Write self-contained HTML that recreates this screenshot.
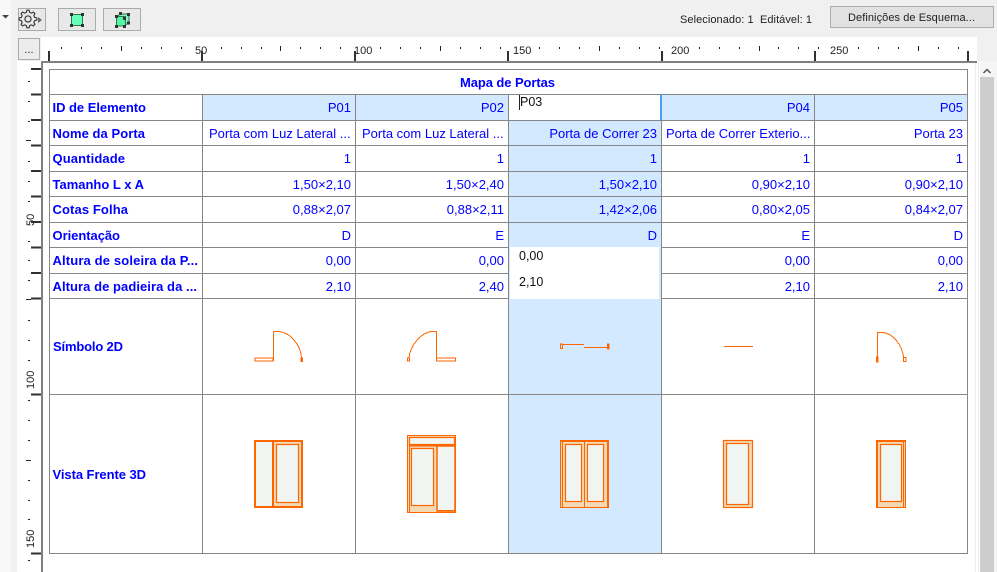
<!DOCTYPE html>
<html><head><meta charset="utf-8">
<style>
html,body{margin:0;padding:0;width:997px;height:572px;overflow:hidden;background:#f0f0f0}
svg{display:block;font-family:"Liberation Sans",Arial,sans-serif}
.b{font-size:13px;font-weight:bold;fill:#0000ff}
.v{font-size:13px;fill:#0000ff;text-anchor:end}
.l{font-size:13px;fill:#0000ff}
.r{font-size:11px;fill:#222}
.t{font-size:11px;fill:#222}
.e{font-size:12.500px;fill:#111}
.o{fill:none;stroke:#ff6600;stroke-width:1;shape-rendering:crispEdges}
</style></head><body>
<svg width="997" height="572" viewBox="0 0 997 572" xmlns="http://www.w3.org/2000/svg">
<!-- backgrounds -->
<rect x="0" y="0" width="997" height="572" fill="#f0f0f0"/>
<rect x="0" y="0" width="11" height="572" fill="#f8f8f8"/>
<rect x="41" y="37" width="936" height="25" fill="#fff"/>
<rect x="17" y="61" width="960" height="511" fill="#fff"/>
<rect x="977" y="61" width="20" height="511" fill="#fff"/>
<rect x="975" y="61" width="1" height="511" fill="#eee"/>
<rect x="978" y="61" width="1" height="511" fill="#eee"/>
<rect x="980" y="61" width="17" height="511" fill="#f5f5f5"/>
<rect x="980" y="77" width="14" height="495" fill="#cdcdcd"/>
<path d="M983.500 73 L987 69.500 L990.500 73" fill="none" stroke="#555" stroke-width="1.500"/>

<!-- toolbar -->
<path d="M2 15h7l-3.500 3.500z" fill="#444"/>
<rect x="18.500" y="8.500" width="27" height="22" fill="#e8e8e8" stroke="#ababab"/>
<g transform="translate(28 19) scale(1.1) translate(-28.500 -19.500)">
<path d="M27.500 11.500h2l.5 2 1.600.7 1.800-1 1.400 1.400-1 1.800.7 1.600 2 .5v2l-2 .5-.7 1.600 1 1.800-1.400 1.400-1.800-1-1.600.7-.5 2h-2l-.5-2-1.600-.7-1.800 1-1.400-1.400 1-1.800-.7-1.600-2-.5v-2l2-.5.7-1.600-1-1.800 1.400-1.400 1.800 1 1.600-.7z" fill="none" stroke="#333" stroke-width="1"/>
<circle cx="28.500" cy="19.500" r="2.800" fill="none" stroke="#333"/>
</g>
<path d="M38 17l4 3-4 3z" fill="#666"/>
<rect x="58.500" y="8.500" width="37" height="22" fill="#e8e8e8" stroke="#ababab"/>
<rect x="71.500" y="14.500" width="11" height="11" fill="#66ffb8" stroke="#2a7a50"/>
<g fill="#333"><rect x="70" y="13" width="3" height="3"/><rect x="81" y="13" width="3" height="3"/><rect x="70" y="24" width="3" height="3"/><rect x="81" y="24" width="3" height="3"/></g>
<rect x="103.500" y="8.500" width="37" height="22" fill="#e8e8e8" stroke="#ababab"/>
<path d="M116.500 16.500l4-2.500h8.500v8.500l-4 3" fill="#8cf0c0" stroke="#2a7a50"/>
<rect x="116.500" y="16.500" width="9" height="9.500" fill="#55f5a8" stroke="#2a7a50"/>
<g fill="#333"><rect x="119" y="12" width="3" height="3"/><rect x="127" y="13" width="3" height="3"/><rect x="115" y="15" width="3" height="3"/><rect x="123" y="17" width="3" height="3"/><rect x="127" y="21.500" width="3" height="3"/><rect x="115" y="25" width="3" height="3"/><rect x="123" y="25" width="3" height="3"/></g>
<rect x="18.500" y="38.500" width="21" height="21" fill="#ececec" stroke="#ababab"/>
<text x="29" y="53" class="t" text-anchor="middle">...</text>
<text x="680" y="23" class="t" xml:space="preserve" textLength="132" lengthAdjust="spacing">Selecionado: 1  Editável: 1</text>
<rect x="830.500" y="6.500" width="163" height="21" fill="#e1e1e1" stroke="#adadad"/>
<text x="848" y="21" class="t" textLength="127" lengthAdjust="spacing">Definições de Esquema...</text>

<!-- top ruler -->
<path d="M61 47v2M81 47v2M101 47v2M141 47v2M161 47v2M181 47v2M221 47v2M241 47v2M261 47v2M300 47v2M320 47v2M340 47v2M380 47v2M400 47v2M420 47v2M460 47v2M480 47v2M500 47v2M539 47v2M559 47v2M579 47v2M619 47v2M639 47v2M659 47v2M699 47v2M719 47v2M739 47v2M778 47v2M798 47v2M818 47v2M858 47v2M878 47v2M898 47v2M938 47v2M958 47v2" stroke="#222" stroke-width="1" fill="none" transform="translate(.5 0)"/>
<path d="M121.500 46v5M280.500 46v5M440.500 46v5M599.500 46v5M759.500 46v5M918.500 46v5" stroke="#222" fill="none"/>
<text x="195" y="54" class="r">50</text>
<text x="354" y="54" class="r">100</text>
<text x="513" y="54" class="r">150</text>
<text x="671" y="54" class="r">200</text>
<text x="830" y="54" class="r">250</text>
<path d="M49 51v10M202 51v10M355 51v10M508 51v10M662 51v10M815 51v10M968 51v10" stroke="#2c3338" stroke-width="2" fill="none"/>

<!-- left ruler -->
<path d="M28 81h2M28 101h2M28 121h2M28 161h2M28 181h2M28 201h2M28 241h2M28 260h2M28 280h2M28 320h2M28 340h2M28 360h2M28 400h2M28 420h2M28 440h2M28 480h2M28 500h2M28 519h2M28 540h2M28 560h2" stroke="#222" fill="none" transform="translate(0 .5)"/>
<path d="M26 140.500h5M26 299.500h5M26 460.500h5" stroke="#222" fill="none"/>
<path d="M31 69h10M31 94.500h10M31 120h10M31 145.500h10M31 171h10M31 196.500h10M31 222h10M31 247.500h10M31 273h10M31 298.500h10M31 394.500h10M31 553.500h10" stroke="#2c3338" stroke-width="2" fill="none"/>
<text transform="translate(34 226) rotate(-90)" class="r">50</text>
<text transform="translate(34 389) rotate(-90)" class="r">100</text>
<text transform="translate(34 548) rotate(-90)" class="r">150</text>
<rect x="41" y="61" width="2" height="511" fill="#808080"/>
<rect x="41" y="61" width="936" height="2" fill="#808080"/>

<!-- table fills -->
<rect x="49" y="69" width="919" height="485" fill="#fff"/>
<rect x="202" y="94" width="306" height="26" fill="#d3e9ff"/>
<rect x="661" y="94" width="306" height="26" fill="#d3e9ff"/>
<rect x="508" y="120" width="153" height="433" fill="#d3e9ff"/>

<!-- grid -->
<g stroke="#868686" fill="none">
<rect x="49.500" y="69.500" width="918" height="484"/>
<path d="M49 94.500h919M49 120.500h919M49 145.500h919M49 171.500h919M49 196.500h919M49 222.500h919M49 247.500h919M49 273.500h919M49 298.500h919M49 394.500h919"/>
<path d="M202.500 94v460M355.500 94v460M508.500 94v460M661.500 94v460M814.500 94v460"/>
</g>

<!-- editors -->
<rect x="509" y="95" width="151" height="25" fill="#fff"/>
<rect x="660" y="94" width="2" height="26" fill="#4a9eed"/>
<rect x="510" y="247" width="149" height="52" fill="#fff"/>
<rect x="509" y="247" width="1" height="52" fill="#d3e9ff"/>
<rect x="659" y="247" width="2" height="52" fill="#d3e9ff"/>
<rect x="519" y="95" width="1" height="15" fill="#222"/>
<text x="520" y="106" class="e" font-size="13">P03</text>
<text x="519" y="260" class="e">0,00</text>
<text x="519" y="286" class="e">2,10</text>

<!-- labels -->
<text x="460" y="87" class="b" textLength="95" lengthAdjust="spacing">Mapa de Portas</text>
<text x="52.500" y="112" class="b" textLength="93.500" lengthAdjust="spacing">ID de Elemento</text>
<text x="52.500" y="138" class="b" textLength="92.500" lengthAdjust="spacing">Nome da Porta</text>
<text x="52.500" y="163" class="b" textLength="72.500" lengthAdjust="spacing">Quantidade</text>
<text x="52.500" y="189" class="b" textLength="91.500" lengthAdjust="spacing">Tamanho L x A</text>
<text x="52.500" y="214" class="b" textLength="75.500" lengthAdjust="spacing">Cotas Folha</text>
<text x="52.500" y="240" class="b" textLength="67.500" lengthAdjust="spacing">Orientação</text>
<text x="52.500" y="265" class="b" textLength="145.500" lengthAdjust="spacing">Altura de soleira da P...</text>
<text x="52.500" y="291" class="b" textLength="144.500" lengthAdjust="spacing">Altura de padieira da ...</text>
<text x="53" y="351" class="b" textLength="70" lengthAdjust="spacing">Símbolo 2D</text>
<text x="52.500" y="479" class="b" textLength="93.500" lengthAdjust="spacing">Vista Frente 3D</text>

<!-- values -->
<text x="351" y="112" class="v">P01</text><text x="504" y="112" class="v">P02</text><text x="810" y="112" class="v">P04</text><text x="963" y="112" class="v">P05</text>
<text x="209" y="138" class="l">Porta com Luz Lateral ...</text><text x="362" y="138" class="l">Porta com Luz Lateral ...</text><text x="657" y="138" class="v">Porta de Correr 23</text><text x="666" y="138" class="l">Porta de Correr Exterio...</text><text x="963" y="138" class="v">Porta 23</text>
<text x="351" y="163" class="v">1</text><text x="504" y="163" class="v">1</text><text x="657" y="163" class="v">1</text><text x="810" y="163" class="v">1</text><text x="963" y="163" class="v">1</text>
<text x="351" y="189" class="v">1,50×2,10</text><text x="504" y="189" class="v">1,50×2,40</text><text x="657" y="189" class="v">1,50×2,10</text><text x="810" y="189" class="v">0,90×2,10</text><text x="963" y="189" class="v">0,90×2,10</text>
<text x="351" y="214" class="v">0,88×2,07</text><text x="504" y="214" class="v">0,88×2,11</text><text x="657" y="214" class="v">1,42×2,06</text><text x="810" y="214" class="v">0,80×2,05</text><text x="963" y="214" class="v">0,84×2,07</text>
<text x="351" y="240" class="v">D</text><text x="504" y="240" class="v">E</text><text x="657" y="240" class="v">D</text><text x="810" y="240" class="v">E</text><text x="963" y="240" class="v">D</text>
<text x="351" y="265" class="v">0,00</text><text x="504" y="265" class="v">0,00</text><text x="810" y="265" class="v">0,00</text><text x="963" y="265" class="v">0,00</text>
<text x="351" y="291" class="v">2,10</text><text x="504" y="291" class="v">2,40</text><text x="810" y="291" class="v">2,10</text><text x="963" y="291" class="v">2,10</text>

<!-- 2D symbols -->
<g class="o">
<rect x="255" y="358" width="18" height="3" stroke-width="1"/>
<path d="M273.500 361V331.500H278C290 332 301 345 301.500 358"/>
<rect x="301" y="358" width="1.500" height="3.500" fill="#ff6600"/>
<rect x="407.500" y="358" width="2" height="3"/>
<path d="M409 358C410 345 422 332 432 331.500H436.500V361"/>
<rect x="436.500" y="358" width="19" height="3"/>
<rect x="560.500" y="344" width="2" height="4.500"/>
<path d="M563 344.500H584M584 347.500H608"/>
<rect x="607.500" y="344" width="1.500" height="5" fill="#ff6600"/>
<path d="M724 346.500H753"/>
<path d="M877.500 358V332.500H882C893 333 902 345 903.500 357"/>
<rect x="876.500" y="357" width="1.500" height="5" fill="#ff6600"/>
<rect x="903.500" y="357.500" width="2.500" height="4"/>
</g>

<!-- 3D door 1 -->
<rect x="273" y="441" width="30" height="67" fill="#f2d9b4"/>
<rect x="255" y="441" width="18" height="66" fill="#f0f5f1" stroke="#ff6600" stroke-width="2"/>
<rect x="273" y="441" width="29" height="66" fill="none" stroke="#ff6600" stroke-width="2"/>
<rect x="276.500" y="444.500" width="22" height="58" fill="#f0f5f1" stroke="#ff6600" stroke-width="1.200"/>
<!-- 3D door 2 -->
<rect x="407.500" y="435.500" width="48" height="77" fill="#f2d9b4" stroke="#ff6600"/>
<rect x="409.500" y="437.500" width="45" height="7" fill="#f0f5f1" stroke="#ff6600" stroke-width="1.200"/>
<rect x="409" y="445" width="46" height="1.500" fill="#ff6600"/>
<path d="M409.500 445V512" stroke="#ff6600" fill="none"/>
<rect x="411.500" y="448.500" width="22" height="57" fill="#f0f5f1" stroke="#ff6600" stroke-width="1.200"/>
<rect x="437" y="446" width="18" height="65" fill="#f0f5f1" stroke="#ff6600" stroke-width="1.500"/>
<path d="M437 510.500H455" stroke="#ff6600"/>
<!-- 3D door 3 -->
<rect x="560.500" y="440.500" width="48" height="67" fill="#f2d9b4" stroke="#ff6600"/>
<path d="M562.500 441v66M584.500 441v66" stroke="#ff6600" fill="none"/>
<rect x="560" y="440" width="49" height="2" fill="#ff6600"/>
<rect x="607" y="440" width="2" height="68" fill="#ff6600"/>
<rect x="565.500" y="444.500" width="16" height="57" fill="#f0f5f1" stroke="#ff6600" stroke-width="1.200"/>
<rect x="587.500" y="444.500" width="16" height="57" fill="#f0f5f1" stroke="#ff6600" stroke-width="1.200"/>
<!-- 3D door 4 -->
<rect x="723.500" y="440.500" width="29" height="67" fill="#f2d9b4" stroke="#ff6600" stroke-width="1.200"/>
<rect x="726.500" y="443.500" width="22" height="61" fill="#f0f5f1" stroke="#ff6600" stroke-width="1.200"/>
<!-- 3D door 5 -->
<rect x="876.500" y="440.500" width="29" height="67" fill="#f2d9b4" stroke="#ff6600"/>
<rect x="876" y="440" width="30" height="2" fill="#ff6600"/>
<rect x="876" y="440" width="2" height="68" fill="#ff6600"/>
<path d="M903.500 441v66" stroke="#ff6600" fill="none"/>
<rect x="880.500" y="444.500" width="21" height="57" fill="#f0f5f1" stroke="#ff6600" stroke-width="1.200"/>
</svg>
</body></html>
